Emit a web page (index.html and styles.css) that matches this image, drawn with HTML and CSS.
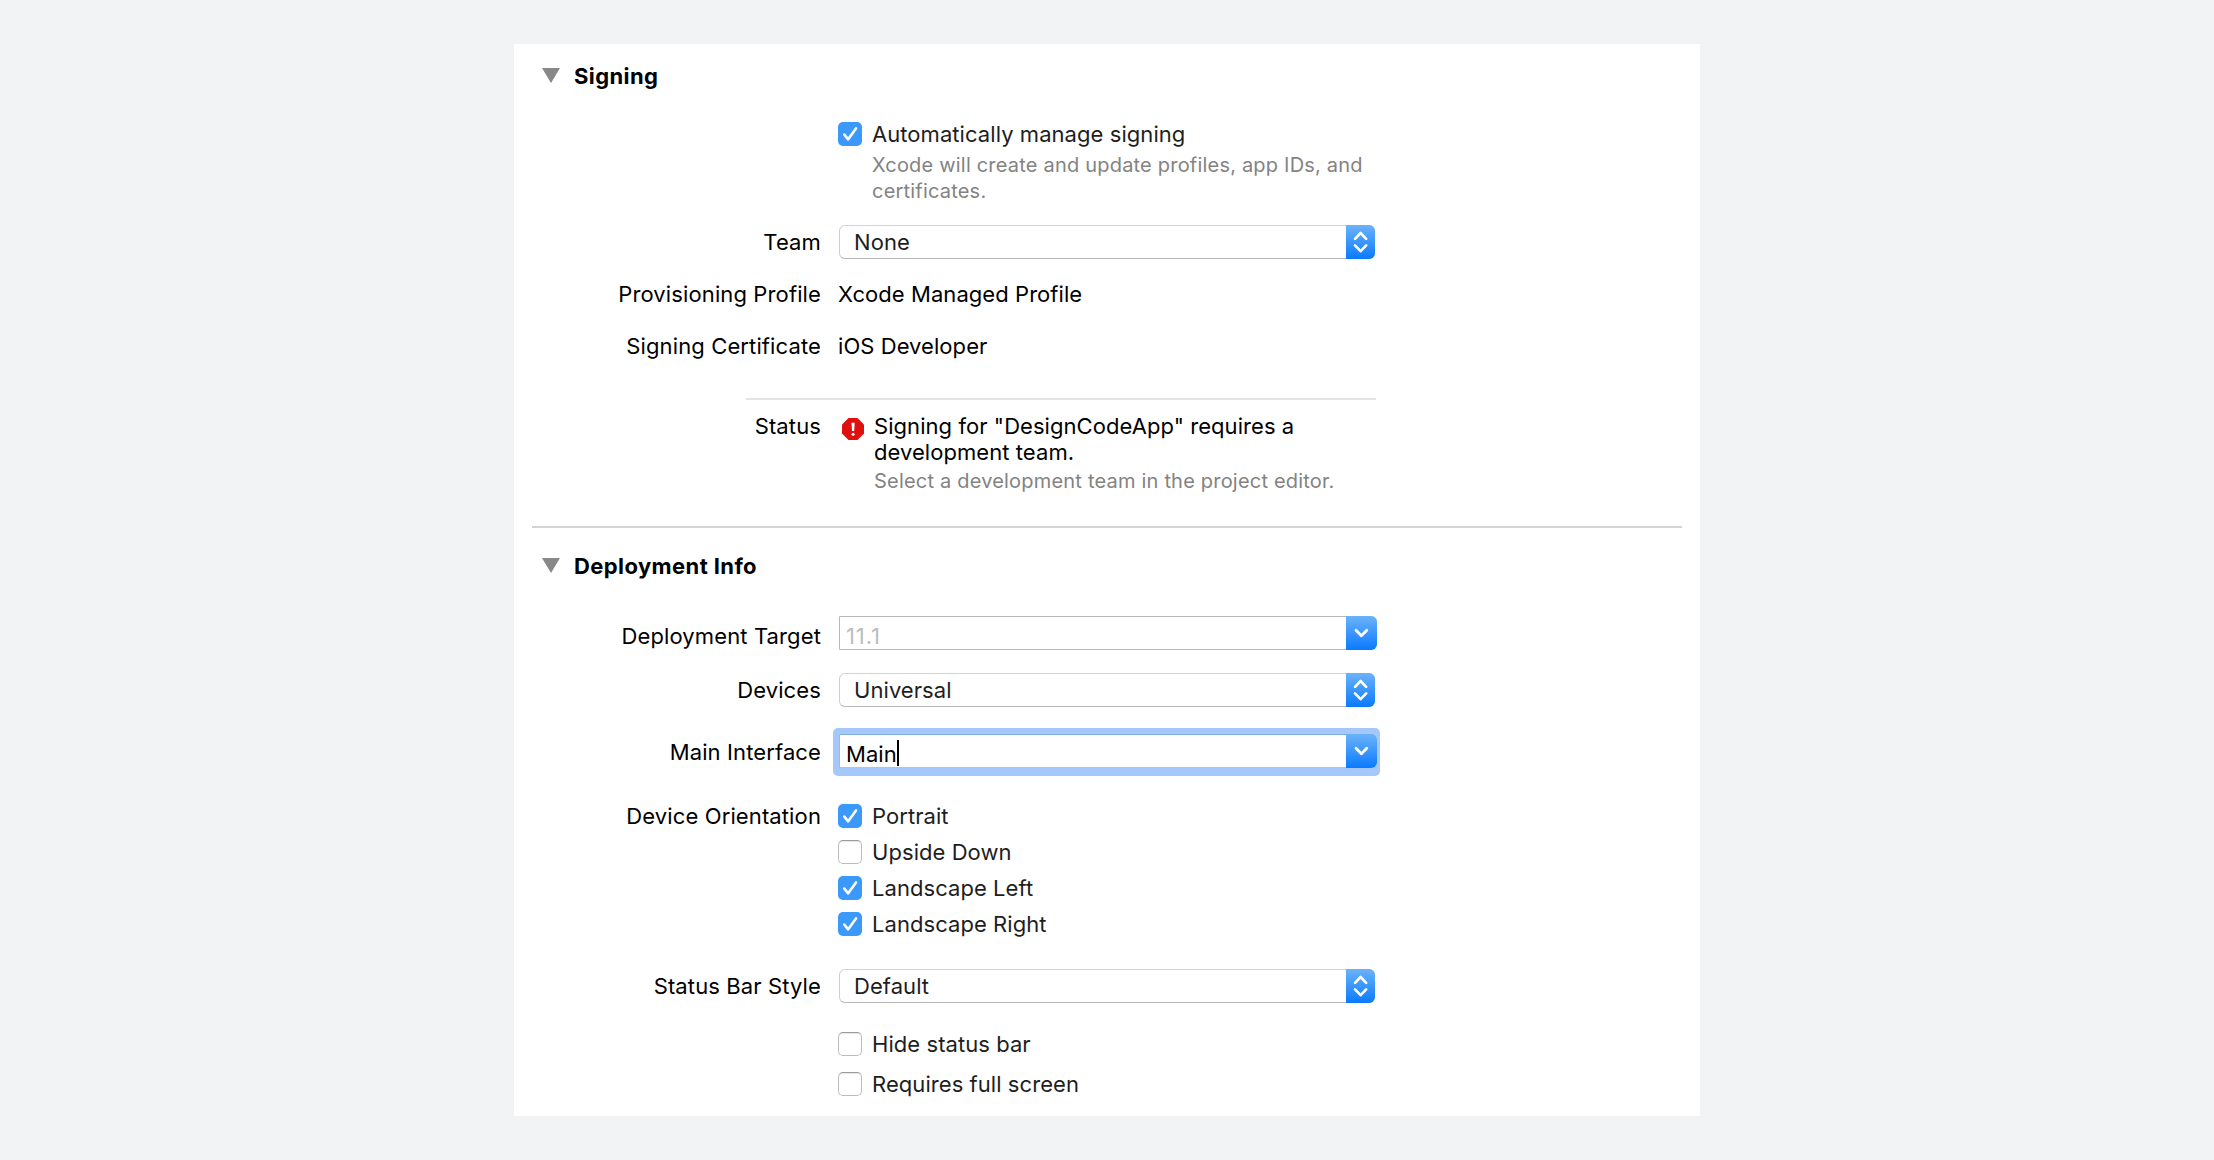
FILE: index.html
```html
<!DOCTYPE html>
<html lang="en">
<head>
<meta charset="utf-8">
<title>Signing and Deployment Info</title>
<link rel="stylesheet" href="styles.css">
</head>
<body>
<svg class="defs" width="0" height="0" aria-hidden="true">
  <defs>
    <symbol id="tick" viewBox="0 0 24 24"><path d="M6.3 12.6 10.2 17.3 18 6.4" fill="none" stroke="#fff" stroke-width="2.6" stroke-linecap="round" stroke-linejoin="round"/></symbol>
    <symbol id="updown" viewBox="0 0 29 34"><path d="M9 13.8 14.6 8 20.2 13.8M9 20.4 14.6 26.2 20.2 20.4" fill="none" stroke="#fff" stroke-width="2.6" stroke-linecap="round" stroke-linejoin="round"/></symbol>
    <symbol id="down" viewBox="0 0 31 34"><path d="M10 14.2 15.4 19.8 20.8 14.2" fill="none" stroke="#fff" stroke-width="2.8" stroke-linecap="round" stroke-linejoin="round"/></symbol>
  </defs>
</svg>
<main class="panel">
  <section class="section signing">
    <h2 class="heading"><svg class="disclosure" viewBox="0 0 18 15"><path d="M0 0H18L9 15Z"/></svg>Signing</h2>
    <div class="row auto">
      <span></span>
      <div class="option">
        <span class="check on"><svg><use href="#tick"/></svg></span>
        <div>
          <div class="soft">Automatically manage signing</div>
          <p class="note">Xcode will create and update profiles, app IDs, and<br>certificates.</p>
        </div>
      </div>
    </div>
    <div class="row team"><span class="label">Team</span><div class="select"><span class="value">None</span><span class="knob"><svg><use href="#updown"/></svg></span></div></div>
    <div class="row profile"><span class="label">Provisioning Profile</span><span>Xcode Managed Profile</span></div>
    <div class="row cert"><span class="label">Signing Certificate</span><span>iOS Developer</span></div>
    <div class="rule"></div>
    <div class="row status">
      <span class="label">Status</span>
      <div class="error">
        <svg class="stop" viewBox="0 0 22 22"><path d="M6.5 0h9L22 6.5v9L15.5 22h-9L0 15.5v-9Z" fill="#e01010"/><path d="M9.5 4.8h3.2l-.5 8.200h-2.200z" fill="#fff"/><circle cx="11.1" cy="16.2" r="1.5" fill="#fff"/></svg>
        <div>
          <div>Signing for "DesignCodeApp" requires a<br>development team.</div>
          <p class="note">Select a development team in the project editor.</p>
        </div>
      </div>
    </div>
  </section>
  <section class="section deployment">
    <h2 class="heading"><svg class="disclosure" viewBox="0 0 18 15"><path d="M0 0H18L9 15Z"/></svg>Deployment Info</h2>
    <div class="row target"><span class="label">Deployment Target</span><div class="combo"><span class="value hint">11.1</span><span class="knob"><svg><use href="#down"/></svg></span></div></div>
    <div class="row devices"><span class="label">Devices</span><div class="select"><span class="value">Universal</span><span class="knob"><svg><use href="#updown"/></svg></span></div></div>
    <div class="row main"><span class="label">Main Interface</span><div class="combo focused"><span class="value">Main</span><span class="caret"></span><span class="knob"><svg><use href="#down"/></svg></span></div></div>
    <div class="row orientation">
      <span class="label">Device Orientation</span>
      <div class="options">
        <div class="option"><span class="check on"><svg><use href="#tick"/></svg></span><span class="soft">Portrait</span></div>
        <div class="option"><span class="check"></span><span class="soft">Upside Down</span></div>
        <div class="option"><span class="check on"><svg><use href="#tick"/></svg></span><span class="soft">Landscape Left</span></div>
        <div class="option"><span class="check on"><svg><use href="#tick"/></svg></span><span class="soft">Landscape Right</span></div>
      </div>
    </div>
    <div class="row barstyle"><span class="label">Status Bar Style</span><div class="select"><span class="value">Default</span><span class="knob"><svg><use href="#updown"/></svg></span></div></div>
    <div class="row extras">
      <span></span>
      <div class="options wide">
        <div class="option"><span class="check"></span><span class="soft">Hide status bar</span></div>
        <div class="option"><span class="check"></span><span class="soft">Requires full screen</span></div>
      </div>
    </div>
  </section>
</main>
</body>
</html>
```
FILE: styles.css
```css
* { box-sizing: border-box; }
body { margin: 0; background: #f1f3f5; font-family: Inter, "Liberation Sans", sans-serif; font-size: 22px; line-height: 26px; letter-spacing: 0.06px; color: #000; }
.defs { display: block; height: 0; }
.panel { position: relative; z-index: 0; width: 1186px; height: 1072px; margin: 44px 0 0 514px; background: #fff; overflow: hidden; }
.heading { display: flex; align-items: center; gap: 14px; margin: 0; padding-left: 28px; font-size: 22px; font-weight: 700; line-height: 26px; letter-spacing: 0.4px; }
.disclosure { width: 18px; height: 15px; fill: #888; margin-top: -1px; }
.signing { height: 484px; padding-top: 19px; }
.signing::after { content: ""; display: block; height: 2px; margin: 32px 18px 0; background: #d3d3d3; }
.deployment { padding-top: 25px; }
.row { display: grid; grid-template-columns: 307px 539px; column-gap: 17px; }
.label { text-align: right; white-space: nowrap; letter-spacing: 0.12px; }
.soft, .value { color: #1e1e1e; }
.note { margin: 5px 0 0; font-size: 20px; line-height: 26px; letter-spacing: 0.2px; color: #838383; }
.option { display: flex; gap: 10px; white-space: nowrap; }
.options { display: grid; row-gap: 10px; }
.wide { row-gap: 14px; }
.check { flex: none; width: 24px; height: 24px; margin-top: 1px; margin-bottom: 1px; border: 1px solid #bcbcbc; border-top-color: #9c9c9c; border-radius: 5px; background: #fff; box-shadow: inset 0 1px 1px #e4e4e4; }
.check.on { border: 0; background: #3b99fc; box-shadow: none; }
.check svg { display: block; width: 24px; height: 24px; }
.select, .combo { display: flex; height: 34px; margin-left: 1px; border: 1px solid #c4c4c4; background: #fff; }
.select { width: 536px; border-color: #d2d2d2 #cfcfcf #b4b4b4; border-radius: 6px; }
.combo { width: 538px; border-color: #b8b8b8; border-radius: 0 6px 6px 0; }
.value { padding: 3px 0 0 14px; }
.combo .value { padding: 6px 0 0 6px; }
.combo .hint { color: #bdbdbd; letter-spacing: 0.9px; }
.knob { width: 29px; height: 34px; margin: -1px -1px -1px auto; border-radius: 0 6px 6px 0; background: linear-gradient(#6bb3fa, #0a7aff); }
.combo .knob { width: 31px; }
.knob svg { display: block; width: 100%; height: 34px; }
.focused { position: relative; border-color: #82aee0 #9dbbe0 #b5c3d4; }
.focused::before { content: ""; position: absolute; z-index: -1; inset: -7px -4px -9px -7px; border-radius: 5px; background: #a3c8f9; }
.focused .value { color: #000; }
.caret { width: 2px; height: 26px; margin-top: 5px; background: #000; }
.auto { margin-top: 32px; }
.team { margin-top: 21px; }
.team .label { padding-top: 4px; }
.profile { margin-top: 22px; }
.cert { margin-top: 26px; }
.rule { width: 630px; height: 2px; margin: 39px 0 13px 232px; background: #e3e3e3; }
.error { display: flex; gap: 10px; padding-left: 4px; white-space: nowrap; }
.stop { width: 22px; height: 22px; margin-top: 5px; }
.error .note { margin-top: 3px; }
.target { margin-top: 37px; }
.target .label { padding-top: 7px; }
.devices { margin-top: 23px; }
.devices .label, .barstyle .label { padding-top: 4px; }
.main { margin-top: 27px; }
.main .label { padding-top: 5px; }
.orientation { margin-top: 35px; }
.barstyle { margin-top: 32px; }
.extras { margin-top: 28px; }
```
